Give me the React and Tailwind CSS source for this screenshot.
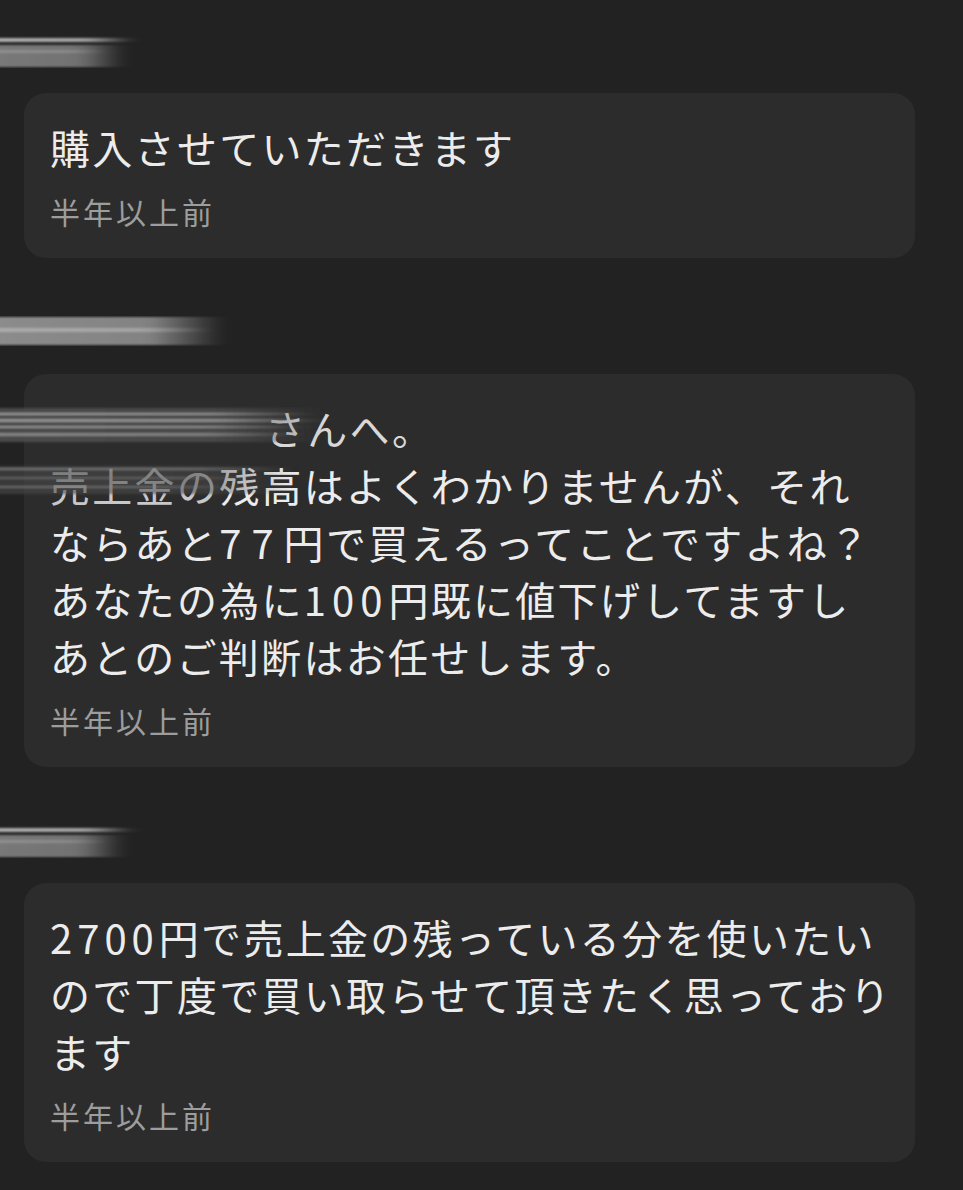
import React from "react";

const jp = { fontFamily: '"Noto Sans CJK JP", "Noto Sans", sans-serif' };

// Motion-blurred name, drawn as soft horizontal bands fading to the right.
// bands: [y, height, color, opacity, endFraction]
function Streak({ id, width, height, bands, className = "" }) {
  return (
    <svg width={width} height={height} viewBox={`0 0 ${width} ${height}`} className={className}>
      <defs>
        <filter id={`${id}-blur`} x="-10%" y="-50%" width="120%" height="200%">
          <feGaussianBlur stdDeviation="8 1.2" />
        </filter>
        {bands.map((b, i) => (
          <linearGradient key={i} id={`${id}-g${i}`} x1="0" x2="1" y1="0" y2="0">
            <stop offset="0" stopColor={b[2]} stopOpacity={b[3]} />
            <stop offset={b[4] * 0.7} stopColor={b[2]} stopOpacity={b[3] * 0.9} />
            <stop offset={b[4]} stopColor={b[2]} stopOpacity="0" />
          </linearGradient>
        ))}
      </defs>
      <g filter={`url(#${id}-blur)`}>
        {bands.map((b, i) => (
          <rect key={i} x="-20" y={b[0]} width={width + 20} height={b[1]} fill={`url(#${id}-g${i})`} />
        ))}
      </g>
    </svg>
  );
}

const headBandsShort = [
  [3, 4, "#c8c8c8", 0.85, 0.85],
  [10, 22, "#8a8a8a", 0.85, 0.8],
  [15, 3, "#a0a0a0", 0.6, 0.7],
];

const headBandsLong = [
  [1, 28, "#a0a0a0", 0.85, 0.9],
  [12, 4, "#c0c0c0", 0.6, 0.85],
];

function Card({ children, overlay }) {
  return (
    <div className="relative rounded-[22px] bg-[#2c2c2c] px-[26px] pt-[26px] pb-[27px]">
      <div className="text-[40px] leading-[57px] tracking-[2.3px] text-[#ececec]" style={jp}>
        {children}
      </div>
      <div className="mt-[15px] text-[30px] leading-[40px] tracking-[3px] text-[#9d9d9d]" style={jp}>
        半年以上前
      </div>
      {overlay}
    </div>
  );
}

function Line({ children }) {
  return <span className="block whitespace-nowrap">{children}</span>;
}

// Blurred name that sits inside the second message, spilling past its left edge
function InlineName() {
  return (
    <div className="pointer-events-none absolute -left-[24px] top-[31px]">
      <Streak
        id="inl"
        width={350}
        height={96}
        bands={[
          [3, 34, "#4e4e4e", 0.9, 0.92],
          [8, 2, "#b0b0b0", 0.8, 0.9],
          [14, 3, "#a6a6a6", 0.8, 0.93],
          [21, 2, "#a8a8a8", 0.8, 0.88],
          [28, 3, "#959595", 0.8, 0.86],
          [61, 28, "#4a4a4a", 0.6, 0.85],
          [63, 2, "#8e8e8e", 0.7, 0.82],
          [72, 2, "#7c7c7c", 0.6, 0.75],
          [81, 2, "#8a8a8a", 0.6, 0.7],
        ]}
      />
    </div>
  );
}

export default function App() {
  return (
    <div className="min-h-[1190px] w-full overflow-hidden bg-[#222222] px-[24px] pt-[35px] pb-[25px]" style={jp}>
      <div className="flex w-[891px] flex-col gap-[58px]">
        <section className="flex flex-col gap-[25px]">
          <Streak id="n1" width={160} height={33} bands={headBandsShort} className="-ml-[24px]" />
          <Card>
            <Line>購入させていただきます</Line>
          </Card>
        </section>

        <section className="flex flex-col gap-[28px]">
          <Streak id="n2" width={250} height={30} bands={headBandsLong} className="-ml-[24px]" />
          <Card overlay={<InlineName />}>
            <Line>
              <span className="inline-block w-[215px]" />
              <span className="text-[#d8d8d8]">さんへ。</span>
            </Line>
            <Line>
              <span className="text-[#c8c8c8]">売上金の</span>残高はよくわかりませんが、それ
            </Line>
            <Line>
              ならあと<span className="tracking-[10px]">77</span>円で買えるってことですよね？
            </Line>
            <Line>
              あなたの為に<span className="tracking-[6px]">100</span>円既に値下げしてますし
            </Line>
            <Line>あとのご判断はお任せします。</Line>
          </Card>
        </section>

        <section className="flex flex-col gap-[25px]">
          <Streak id="n3" width={160} height={33} bands={headBandsShort} className="-ml-[24px]" />
          <Card>
            <Line>
              <span className="tracking-[5px]">2700</span>円で売上金の残っている分を使いたい
            </Line>
            <Line>ので丁度で買い取らせて頂きたく思っており</Line>
            <Line>ます</Line>
          </Card>
        </section>
      </div>
    </div>
  );
}
